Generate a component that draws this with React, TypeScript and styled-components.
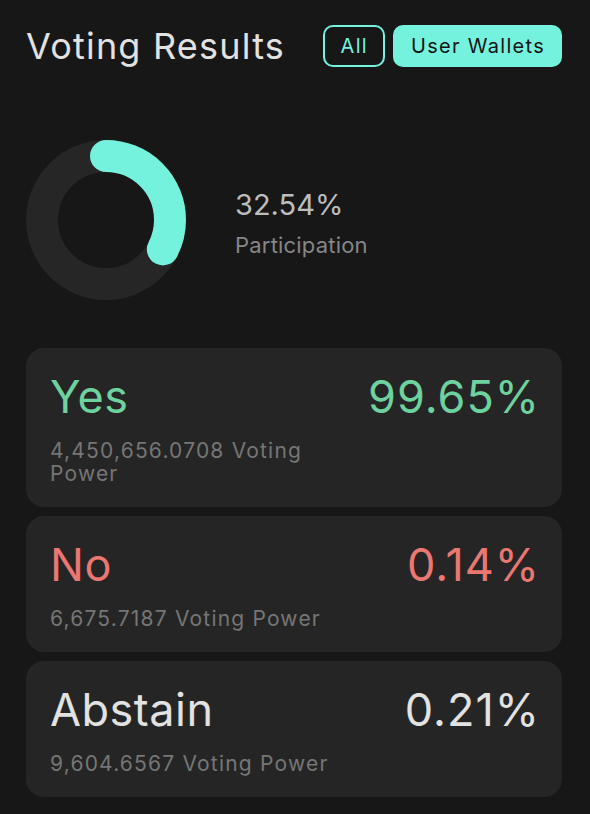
import styled, { createGlobalStyle } from "styled-components";

const GlobalStyle = createGlobalStyle`
  html, body {
    margin: 0;
    padding: 0;
    background: #171717;
  }
  body {
    font-family: Inter, "Noto Sans", sans-serif;
  }
`;

const teal = "#74f2dd";

interface Result {
  label: string;
  percent: string;
  power: string;
  tone: string;
}

const results: Result[] = [
  { label: "Yes", percent: "99.65%", power: "4,450,656.0708 Voting Power", tone: "#6dd29f" },
  { label: "No", percent: "0.14%", power: "6,675.7187 Voting Power", tone: "#ea7771" },
  { label: "Abstain", percent: "0.21%", power: "9,604.6567 Voting Power", tone: "#e2e2e2" },
];

function Donut({ value }: { value: number }) {
  const r = 64;
  const c = 2 * Math.PI * r;
  const len = (value / 100) * c;
  return (
    <svg width="160" height="160" viewBox="0 0 160 160">
      <circle cx="80" cy="80" r={r} fill="none" stroke="#262626" strokeWidth="32" />
      <circle
        cx="80"
        cy="80"
        r={r}
        fill="none"
        stroke={teal}
        strokeWidth="32"
        strokeLinecap="round"
        strokeDasharray={`${len} ${c}`}
        transform="rotate(-90 80 80)"
      />
    </svg>
  );
}

export default function App() {
  return (
    <>
      <GlobalStyle />
      <Page>
        <Header>
          <Title>Voting Results</Title>
          <Toggle>
            <ToggleButton>All</ToggleButton>
            <ToggleButton $active>User Wallets</ToggleButton>
          </Toggle>
        </Header>
        <Summary>
          <Donut value={32.54} />
          <Stat>
            <StatValue>32.54%</StatValue>
            <StatLabel>Participation</StatLabel>
          </Stat>
        </Summary>
        <Cards>
          {results.map((r) => (
            <Card key={r.label}>
              <CardLeft>
                <Choice $tone={r.tone}>{r.label}</Choice>
                <Power>{r.power}</Power>
              </CardLeft>
              <Percent $tone={r.tone}>{r.percent}</Percent>
            </Card>
          ))}
        </Cards>
      </Page>
    </>
  );
}

const Page = styled.div`
  width: 590px;
  box-sizing: border-box;
  padding: 25px 28px 18px 26px;
  display: flex;
  flex-direction: column;
`;

const Header = styled.div`
  display: flex;
  align-items: center;
  justify-content: space-between;
  height: 42px;
`;

const Title = styled.h1`
  margin: 0;
  font-size: 36px;
  font-weight: 400;
  color: #e2e2e2;
  letter-spacing: 1.2px;
`;

const Toggle = styled.div`
  display: flex;
  gap: 8px;
`;

const ToggleButton = styled.button<{ $active?: boolean }>`
  height: 42px;
  box-sizing: border-box;
  padding: 0 15px 0 16px;
  border-radius: 10px;
  border: 2px solid ${teal};
  background: ${(p) => (p.$active ? teal : "transparent")};
  color: ${(p) => (p.$active ? "#141414" : teal)};
  font-family: Inter, sans-serif;
  font-size: 20px;
  font-weight: 400;
  letter-spacing: 1.3px;
`;

const Summary = styled.div`
  display: flex;
  align-items: center;
  gap: 49px;
  margin-top: 73px;
`;

const Stat = styled.div`
  display: flex;
  flex-direction: column;
  gap: 9px;
  margin-top: 7px;
`;

const StatValue = styled.div`
  font-size: 29px;
  color: #bdbdbd;
  line-height: 34px;
`;

const StatLabel = styled.div`
  font-size: 22px;
  color: #868686;
  line-height: 28px;
  letter-spacing: 0.2px;
`;

const Cards = styled.div`
  display: flex;
  flex-direction: column;
  gap: 9px;
  margin-top: 48px;
`;

const Card = styled.div`
  display: flex;
  justify-content: space-between;
  align-items: flex-start;
  background: #252525;
  border-radius: 18px;
  padding: 22px 22px 22px 24px;
`;

const CardLeft = styled.div`
  flex: 1;
  display: flex;
  flex-direction: column;
  gap: 15px;
`;

const Choice = styled.div<{ $tone: string }>`
  font-size: 45px;
  line-height: 54px;
  letter-spacing: 0.5px;
  color: ${(p) => p.$tone};
`;

const Power = styled.div`
  font-size: 21px;
  line-height: 23px;
  letter-spacing: 1.2px;
  color: #767676;
`;

const Percent = styled.div<{ $tone: string }>`
  font-size: 45px;
  line-height: 54px;
  letter-spacing: 1px;
  color: ${(p) => p.$tone};
`;
